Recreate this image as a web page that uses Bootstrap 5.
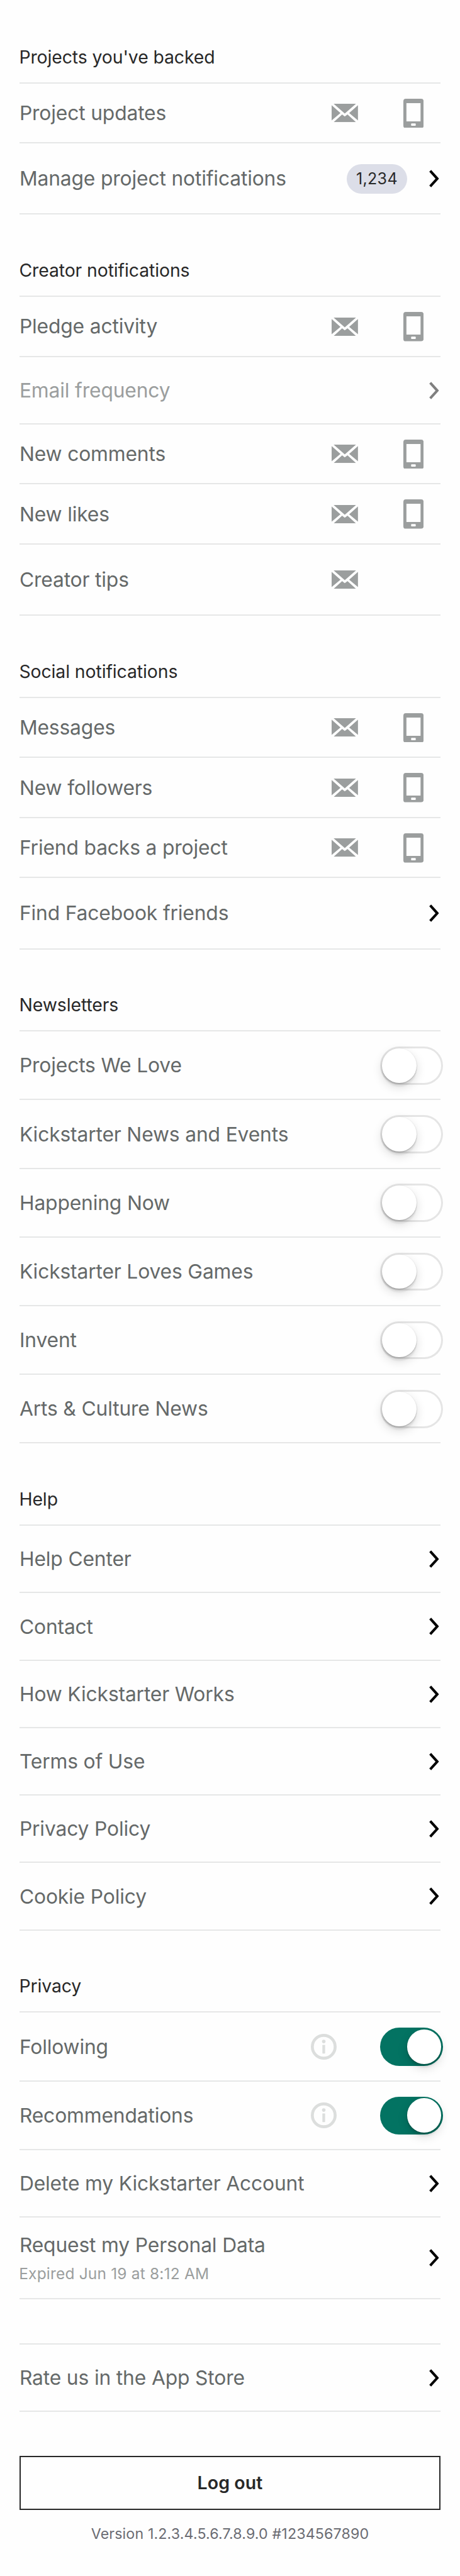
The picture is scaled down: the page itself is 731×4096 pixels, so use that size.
<!DOCTYPE html>
<html lang="en">
<head>
<meta charset="utf-8">
<meta name="viewport" content="width=device-width, initial-scale=1">
<title>Settings</title>
<link href="https://cdn.jsdelivr.net/npm/bootstrap@5.3.0/dist/css/bootstrap.min.css" rel="stylesheet">
<style>
:root { --u: .9752px; }
body { font-family: Inter, "Liberation Sans", sans-serif; background: #fefefe; color: #282828; }
.settings { padding: 0 calc(32 * var(--u)); }
.rule { border-bottom: 2px solid #e6e7e7; }
.section-title { height: calc(134 * var(--u)); margin: 0; padding-bottom: calc(18.6 * var(--u)); font-size: 28.4px; line-height: 44px; font-weight: 400; letter-spacing: -.1px; text-indent: -.8px; }
.section-title.first { height: calc(136 * var(--u)); }
.setting { height: calc(98 * var(--u)); padding-top: 1px; font-size: 31.8px; line-height: 38px; letter-spacing: -.16px; color: #656969; }
.setting.h110 { height: calc(110 * var(--u)); }
.setting.h112 { height: calc(112 * var(--u)); }
.setting.h116 { height: calc(116 * var(--u)); }
.setting.h133 { height: calc(133 * var(--u)); }
.setting-label { text-indent: -.3px; white-space: nowrap; }
.setting.off { color: #9b9e9e; }
.gap-rule { height: calc(74 * var(--u)); }
.ico { display: block; flex: none; fill: #9b9e9e; }
.ico-mail { width: calc(43 * var(--u)); height: calc(30 * var(--u)); margin-right: calc(74 * var(--u)); }
.ico-phone { width: calc(33 * var(--u)); height: calc(48 * var(--u)); margin-right: calc(27 * var(--u)); }
.ico-mail.alone { margin-right: calc(134 * var(--u)); }
.ico-chevron { width: calc(16 * var(--u)); height: calc(29 * var(--u)); margin-right: calc(2 * var(--u)); fill: none; stroke: #000; }
.off .ico-chevron { stroke: #7f7f7f; }
.ico-info { width: calc(42 * var(--u)); height: calc(42 * var(--u)); margin-right: calc(71 * var(--u)); fill: none; }
.count { width: calc(99 * var(--u)); height: calc(48 * var(--u)); margin-right: calc(36 * var(--u)); background: #dcdee8; color: #282828; font-size: 25px; letter-spacing: .35px; }
.toggle { width: calc(102 * var(--u)); height: calc(62 * var(--u)); margin-right: calc(-4 * var(--u)); padding: 0 calc(3 * var(--u)); border: 0; border-radius: 99px; background: #fff; box-shadow: inset 0 0 0 3px #e5e5e5; }
.toggle .knob { width: calc(56 * var(--u)); height: calc(56 * var(--u)); border-radius: 50%; background: #fff; box-shadow: 0 6px 16px rgba(0,0,0,.15), 0 6px 2px rgba(0,0,0,.05), 0 1px 2px rgba(0,0,0,.25); }
.toggle.on { background: #037362; box-shadow: none; justify-content: flex-end; padding-right: calc(2.5 * var(--u)); }
.note { font-size: 24.5px; line-height: 30px; letter-spacing: .18px; color: #9b9e9e; text-indent: -1px; margin-top: 11.5px; }
.log-out { height: calc(88 * var(--u)); margin-top: calc(72 * var(--u)); border: 2px solid #282828; border-radius: 0; font-size: 28.5px; font-weight: 600; color: #282828; letter-spacing: .1px; padding: 0; }
.version { margin: calc(23.4 * var(--u)) 0 0; font-size: 23.2px; line-height: 30px; letter-spacing: .15px; color: #6b6c73; }
</style>
</head>
<body>
<svg class="d-none" xmlns="http://www.w3.org/2000/svg">
  <symbol id="mail" viewBox="0 0 43 30"><path d="M3.3 0H39.7L24.4 13.4L21.4 16L18.5 13.4ZM0 2.2L14.4 15L0 27.3ZM43 2.2V27.3L28.6 15ZM3.3 30L17.1 17.4L21.4 20.7L25.9 17.4L39.7 30Z"/></symbol>
  <symbol id="phone" viewBox="0 0 33 48"><path fill-rule="evenodd" d="M4 0H29Q33 0 33 4V44Q33 48 29 48H4Q0 48 0 44V4Q0 0 4 0ZM5 7.3V36.8H28V7.3ZM13.6 40.2Q12.6 40.2 12.6 41.2V43Q12.6 44 13.6 44H19.2Q20.2 44 20.2 43V41.2Q20.2 40.2 19.2 40.2Z"/></symbol>
  <symbol id="chevron" viewBox="0 0 16 29"><path d="M1.7 1.7L13.2 14.4L1.7 27" stroke-width="4.2"/></symbol>
  <symbol id="info" viewBox="0 0 42 42"><circle cx="21" cy="21" r="18.6" stroke="#dcdedd" stroke-width="4.8"/><circle cx="21" cy="12.4" r="2.9" fill="#dcdedd"/><rect x="18.8" y="18" width="4.4" height="14" rx=".6" fill="#dcdedd"/></symbol>
</svg>

<main class="settings">
  <section>
    <h2 class="section-title first rule d-flex align-items-end">Projects you've backed</h2>
    <div class="setting rule d-flex align-items-center"><span class="setting-label me-auto">Project updates</span><svg class="ico ico-mail"><use href="#mail"/></svg><svg class="ico ico-phone"><use href="#phone"/></svg></div>
    <div class="setting h116 rule d-flex align-items-center"><span class="setting-label me-auto">Manage project notifications</span><span class="count rounded-pill d-flex align-items-center justify-content-center">1,234</span><svg class="ico ico-chevron"><use href="#chevron"/></svg></div>
  </section>

  <section>
    <h2 class="section-title rule d-flex align-items-end">Creator notifications</h2>
    <div class="setting rule d-flex align-items-center"><span class="setting-label me-auto">Pledge activity</span><svg class="ico ico-mail"><use href="#mail"/></svg><svg class="ico ico-phone"><use href="#phone"/></svg></div>
    <div class="setting h110 off rule d-flex align-items-center"><span class="setting-label me-auto">Email frequency</span><svg class="ico ico-chevron"><use href="#chevron"/></svg></div>
    <div class="setting rule d-flex align-items-center"><span class="setting-label me-auto">New comments</span><svg class="ico ico-mail"><use href="#mail"/></svg><svg class="ico ico-phone"><use href="#phone"/></svg></div>
    <div class="setting rule d-flex align-items-center"><span class="setting-label me-auto">New likes</span><svg class="ico ico-mail"><use href="#mail"/></svg><svg class="ico ico-phone"><use href="#phone"/></svg></div>
    <div class="setting h116 rule d-flex align-items-center"><span class="setting-label me-auto">Creator tips</span><svg class="ico ico-mail alone"><use href="#mail"/></svg></div>
  </section>

  <section>
    <h2 class="section-title rule d-flex align-items-end">Social notifications</h2>
    <div class="setting rule d-flex align-items-center"><span class="setting-label me-auto">Messages</span><svg class="ico ico-mail"><use href="#mail"/></svg><svg class="ico ico-phone"><use href="#phone"/></svg></div>
    <div class="setting rule d-flex align-items-center"><span class="setting-label me-auto">New followers</span><svg class="ico ico-mail"><use href="#mail"/></svg><svg class="ico ico-phone"><use href="#phone"/></svg></div>
    <div class="setting rule d-flex align-items-center"><span class="setting-label me-auto">Friend backs a project</span><svg class="ico ico-mail"><use href="#mail"/></svg><svg class="ico ico-phone"><use href="#phone"/></svg></div>
    <div class="setting h116 rule d-flex align-items-center"><span class="setting-label me-auto">Find Facebook friends</span><svg class="ico ico-chevron"><use href="#chevron"/></svg></div>
  </section>

  <section>
    <h2 class="section-title rule d-flex align-items-end">Newsletters</h2>
    <div class="setting h112 rule d-flex align-items-center"><span class="setting-label me-auto">Projects We Love</span><button class="toggle d-flex align-items-center" role="switch" aria-checked="false"><span class="knob"></span></button></div>
    <div class="setting h112 rule d-flex align-items-center"><span class="setting-label me-auto">Kickstarter News and Events</span><button class="toggle d-flex align-items-center" role="switch" aria-checked="false"><span class="knob"></span></button></div>
    <div class="setting h112 rule d-flex align-items-center"><span class="setting-label me-auto">Happening Now</span><button class="toggle d-flex align-items-center" role="switch" aria-checked="false"><span class="knob"></span></button></div>
    <div class="setting h112 rule d-flex align-items-center"><span class="setting-label me-auto">Kickstarter Loves Games</span><button class="toggle d-flex align-items-center" role="switch" aria-checked="false"><span class="knob"></span></button></div>
    <div class="setting h112 rule d-flex align-items-center"><span class="setting-label me-auto">Invent</span><button class="toggle d-flex align-items-center" role="switch" aria-checked="false"><span class="knob"></span></button></div>
    <div class="setting h112 rule d-flex align-items-center"><span class="setting-label me-auto">Arts &amp; Culture News</span><button class="toggle d-flex align-items-center" role="switch" aria-checked="false"><span class="knob"></span></button></div>
  </section>

  <section>
    <h2 class="section-title rule d-flex align-items-end">Help</h2>
    <div class="setting h110 rule d-flex align-items-center"><span class="setting-label me-auto">Help Center</span><svg class="ico ico-chevron"><use href="#chevron"/></svg></div>
    <div class="setting h110 rule d-flex align-items-center"><span class="setting-label me-auto">Contact</span><svg class="ico ico-chevron"><use href="#chevron"/></svg></div>
    <div class="setting h110 rule d-flex align-items-center"><span class="setting-label me-auto">How Kickstarter Works</span><svg class="ico ico-chevron"><use href="#chevron"/></svg></div>
    <div class="setting h110 rule d-flex align-items-center"><span class="setting-label me-auto">Terms of Use</span><svg class="ico ico-chevron"><use href="#chevron"/></svg></div>
    <div class="setting h110 rule d-flex align-items-center"><span class="setting-label me-auto">Privacy Policy</span><svg class="ico ico-chevron"><use href="#chevron"/></svg></div>
    <div class="setting h110 rule d-flex align-items-center"><span class="setting-label me-auto">Cookie Policy</span><svg class="ico ico-chevron"><use href="#chevron"/></svg></div>
  </section>

  <section>
    <h2 class="section-title rule d-flex align-items-end">Privacy</h2>
    <div class="setting h112 rule d-flex align-items-center"><span class="setting-label me-auto">Following</span><svg class="ico ico-info"><use href="#info"/></svg><button class="toggle on d-flex align-items-center" role="switch" aria-checked="true"><span class="knob"></span></button></div>
    <div class="setting h112 rule d-flex align-items-center"><span class="setting-label me-auto">Recommendations</span><svg class="ico ico-info"><use href="#info"/></svg><button class="toggle on d-flex align-items-center" role="switch" aria-checked="true"><span class="knob"></span></button></div>
    <div class="setting h110 rule d-flex align-items-center"><span class="setting-label me-auto">Delete my Kickstarter Account</span><svg class="ico ico-chevron"><use href="#chevron"/></svg></div>
    <div class="setting h133 rule d-flex align-items-center"><div class="me-auto"><div class="setting-label">Request my Personal Data</div><div class="note">Expired Jun 19 at 8:12 AM</div></div><svg class="ico ico-chevron"><use href="#chevron"/></svg></div>
  </section>

  <section>
    <div class="gap-rule rule"></div>
    <div class="setting h110 rule d-flex align-items-center"><span class="setting-label me-auto">Rate us in the App Store</span><svg class="ico ico-chevron"><use href="#chevron"/></svg></div>
  </section>

  <button class="btn log-out d-block w-100">Log out</button>
  <p class="version text-center">Version 1.2.3.4.5.6.7.8.9.0 #1234567890</p>
</main>
<script src="https://cdn.jsdelivr.net/npm/bootstrap@5.3.0/dist/js/bootstrap.bundle.min.js"></script>
</body>
</html>
